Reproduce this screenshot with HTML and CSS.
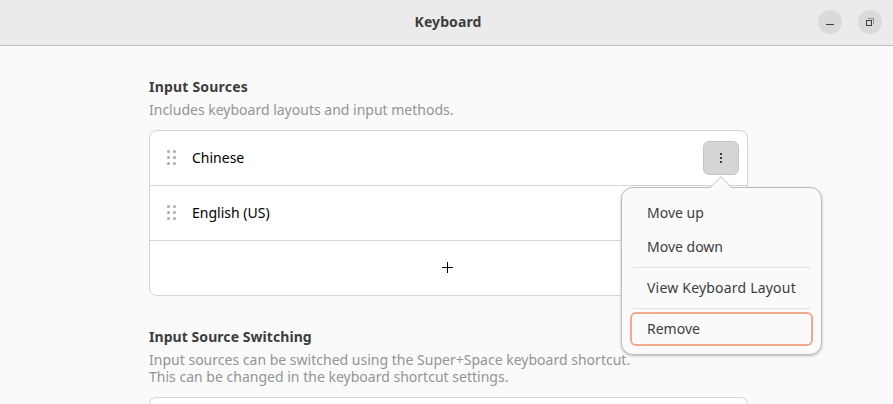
FILE: index.html
```html
<!DOCTYPE html>
<html lang="en">
<head>
<meta charset="utf-8">
<title>Keyboard</title>
<link rel="stylesheet" href="styles.css">
</head>
<body>
<header class="titlebar">
  <h1 class="title">Keyboard</h1>
  <div class="window-controls">
    <button class="control" aria-label="Minimize"><svg width="24" height="24" shape-rendering="crispEdges"><path d="M8 14h8v1H8z" fill="#3d3d3d"/></svg></button>
    <button class="control" aria-label="Restore"><svg width="24" height="24" shape-rendering="crispEdges"><path d="M10 8.500h5.500v5.500" fill="none" stroke="#929292"/><path d="M8.500 10.500h5v5h-5z" fill="none" stroke="#3d3d3d"/></svg></button>
  </div>
</header>
<main class="content">
  <section class="group">
    <h2 class="heading sources">Input Sources</h2>
    <p class="description">Includes keyboard layouts and input methods.</p>
    <div class="card">
      <div class="row">
        <svg class="grip" width="10" height="16"><circle cx="1.500" cy="1.500" r="1.500"/><circle cx="7.500" cy="1.500" r="1.500"/><circle cx="1.500" cy="7.500" r="1.500"/><circle cx="7.500" cy="7.500" r="1.500"/><circle cx="1.500" cy="13.500" r="1.500"/><circle cx="7.500" cy="13.500" r="1.500"/></svg>
        <span class="name">Chinese</span>
        <div class="menu-anchor">
          <button class="more" aria-label="Options"><svg width="2" height="10" shape-rendering="crispEdges" fill="#3d3d3d"><path d="M0 0h2v2H0zM0 4h2v2H0zM0 8h2v2H0z"/></svg></button>
          <div class="popover">
            <svg class="arrow" width="24" height="13"><path d="M0 13V12L1 12L12 .9L23 12L24 12V13z" fill="#fafafa"/><path d="M0 11.500H1.300L12 .7L22.700 11.500H24" fill="none" stroke="#bebebe"/></svg>
            <div class="item">Move up</div>
            <div class="item">Move down</div>
            <div class="separator"></div>
            <div class="item view">View Keyboard Layout</div>
            <div class="separator"></div>
            <div class="item focused">Remove</div>
          </div>
        </div>
      </div>
      <div class="row">
        <svg class="grip" width="10" height="16"><circle cx="1.500" cy="1.500" r="1.500"/><circle cx="7.500" cy="1.500" r="1.500"/><circle cx="1.500" cy="7.500" r="1.500"/><circle cx="7.500" cy="7.500" r="1.500"/><circle cx="1.500" cy="13.500" r="1.500"/><circle cx="7.500" cy="13.500" r="1.500"/></svg>
        <span class="name">English (US)</span>
      </div>
      <div class="row add"><svg width="11" height="11" shape-rendering="crispEdges"><path d="M5 0h1v5h5v1H6v5H5V6H0V5h5z"/></svg></div>
    </div>
  </section>
  <section class="group">
    <h2 class="heading">Input Source Switching</h2>
    <p class="description shortcut">Input sources can be switched using the Super+Space keyboard shortcut.<br>This can be changed in the keyboard shortcut settings.</p>
    <div class="card last"></div>
  </section>
</main>
</body>
</html>
```
FILE: styles.css
```css
* { box-sizing: border-box; }

body {
  display: flex;
  flex-direction: column;
  margin: 0;
  height: 404px;
  overflow: hidden;
  background: #fafafa;
  color: #3d3d3d;
  font: 14px/17px "Noto Sans", "Open Sans", sans-serif;
}

button { padding: 0; border: 0; }

.titlebar {
  display: grid;
  grid-template-columns: 1fr auto 1fr;
  align-items: center;
  height: 46px;
  padding: 0 11px 1px;
  background: #ebebeb;
  border-bottom: 1px solid #bfbfbf;
}

.title {
  grid-column: 2;
  margin: -2px 0 0 3px;
  font-size: 14px;
  line-height: 17px;
  font-weight: 700;
  letter-spacing: 0.08px;
}

.window-controls {
  display: flex;
  justify-content: flex-end;
  gap: 16px;
}

.control {
  width: 24px;
  height: 24px;
  border-radius: 50%;
  background: #dadada;
}

.control svg { display: block; }

.content {
  width: 599px;
  height: 358px;
  margin-left: 149px;
  padding-top: 32px;
}

.group { margin-bottom: 32px; }
.group:last-child { margin-bottom: 0; }

.heading {
  margin: 0 0 6px;
  font-size: 14px;
  line-height: 17px;
  font-weight: 700;
  letter-spacing: 0.06px;
}

.sources { letter-spacing: 0.2px; }

.description {
  margin: 0 0 12px;
  color: #929595;
}

.shortcut { letter-spacing: 0.01px; }

.card {
  border: 1px solid #d5d5d5;
  border-radius: 8px;
  background: #fff;
}

.last {
  height: 7px;
  border-bottom: 0;
  border-radius: 8px 8px 0 0;
}

.row {
  display: flex;
  align-items: center;
  height: 55px;
  padding: 0 8px 0 17px;
  color: #000;
}

.row + .row { border-top: 1px solid #d5d5d5; }
.row:first-child { height: 54px; }

.grip {
  margin-right: 15px;
  fill: #aaa;
}

.name { padding-bottom: 2px; }

.add {
  justify-content: center;
  padding: 0 3px 2px 0;
}

.menu-anchor {
  position: relative;
  margin-left: auto;
}

.more {
  display: flex;
  align-items: center;
  justify-content: center;
  width: 36px;
  height: 34px;
  border: 1px solid #c6c6c6;
  border-radius: 6px;
  background: #d5d5d5;
}

.popover {
  position: absolute;
  top: 46px;
  left: -82px;
  width: 201px;
  padding: 8px;
  border: 1px solid #bebebe;
  border-radius: 12px;
  background: #fafafa;
  color: #3d3d3d;
  box-shadow: 0 1px 3px rgba(0, 0, 0, 0.25);
}

.arrow {
  position: absolute;
  top: -12px;
  left: 87px;
}

.item {
  display: flex;
  align-items: center;
  height: 34px;
  padding: 0 0 2px 17px;
  white-space: nowrap;
}

.view { letter-spacing: 0.2px; }

.focused {
  padding-left: 15px;
  border: 2px solid #f2a88c;
  border-radius: 6px;
}

.separator {
  height: 1px;
  margin: 3px;
  background: #dedede;
}
```
